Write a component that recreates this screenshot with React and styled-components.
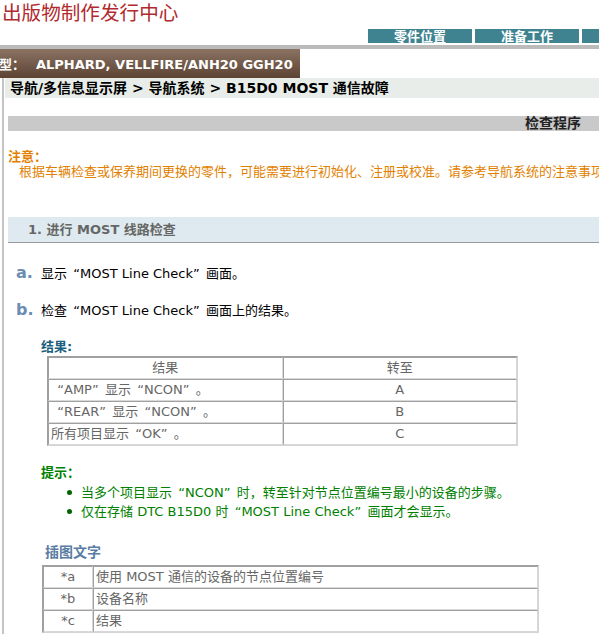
import React from "react";
import styled, { createGlobalStyle } from "styled-components";

const GlobalStyle = createGlobalStyle`
  html, body {
    margin: 0;
    padding: 0;
    background: #fff;
    overflow: hidden;
  }
  body {
    font-family: "DejaVu Sans", "Noto Sans CJK SC", sans-serif;
    font-size: 13px;
    color: #000;
  }
`;

const Page = styled.div`
  width: 599px;
  height: 634px;
  overflow: hidden;
`;

const Title = styled.div`
  height: 29px;
  line-height: 24px;
  padding-left: 2px;
  font-family: "Noto Sans CJK SC", sans-serif;
  font-size: 19.6px;
  color: #b02a2e;
  white-space: nowrap;
`;

const Tabs = styled.div`
  display: flex;
  gap: 3px;
  margin-left: 368px;
  height: 14px;
  white-space: nowrap;
`;

const Tab = styled.div`
  flex: 0 0 104px;
  height: 14px;
  line-height: 14px;
  background: #3f8391;
  color: #fff;
  font-family: "Noto Sans CJK SC", sans-serif;
  font-weight: bold;
  font-size: 13px;
  text-align: center;
`;

const Rule = styled.div`
  height: 4px;
  margin-top: 2px;
  background: #bbbbbb;
`;

const ModelBar = styled.div`
  width: 300px;
  height: 29px;
  line-height: 29px;
  background: linear-gradient(#8b7363, #5c4333);
  color: #fff;
  font-weight: bold;
  font-size: 13px;
  white-space: nowrap;
  overflow: hidden;
`;

const ModelLabel = styled.span`
  display: inline-block;
  width: 37px;
  margin-left: -1px;
  font-family: "Noto Sans CJK SC", sans-serif;
`;

const Main = styled.div`
  margin-left: 2px;
  border-left: 2px solid #c4c4c4;
  padding-bottom: 40px;
`;

const Breadcrumb = styled.div`
  height: 20px;
  line-height: 20px;
  margin-left: 1px;
  padding-left: 5px;
  background: #e9ede9;
  font-weight: bold;
  font-size: 14px;
  white-space: nowrap;
`;

const Content = styled.div`
  padding-left: 4px;
`;

const ProcedureBar = styled.div`
  margin-top: 18px;
  height: 15px;
  line-height: 15px;
  background: #c9c9c9;
  padding-right: 18px;
  text-align: right;
  font-weight: bold;
  font-size: 14px;
  color: #222;
`;

const NoteTitle = styled.div`
  margin-top: 18px;
  line-height: 15px;
  color: #e27f00;
  font-weight: bold;
`;

const NoteText = styled.div`
  line-height: 15px;
  padding-left: 11px;
  color: #e27f00;
  white-space: nowrap;
`;

const Section = styled.div`
  margin-top: 38px;
  height: 25px;
  line-height: 25px;
  padding-left: 20px;
  background: #deeaf0;
  border-bottom: 1px solid #9a9a9a;
  color: #666;
  font-weight: bold;
`;

const Step = styled.div`
  display: flex;
  align-items: baseline;
  margin-top: ${(p) => p.gap}px;
  padding-left: 8px;
  line-height: 20px;
`;

const StepMark = styled.span`
  flex: 0 0 25px;
  color: #6b8cb3;
  font-weight: bold;
  font-size: 16px;
`;

/* full-width curly quotes: the glyph sits at the inner edge of a 1em box */
const Quote = styled.span`
  display: inline-block;
  width: 1em;
  text-align: ${(p) => (p.open ? "right" : "left")};
`;

const Block = styled.div`
  padding-left: 33px;
`;

const Label = styled.div`
  margin-top: ${(p) => p.gap}px;
  line-height: ${(p) => p.lh || 18}px;
  color: ${(p) => p.color};
  font-weight: bold;
  font-size: ${(p) => p.size || 13}px;
  padding-left: ${(p) => p.indent || 0}px;
`;

const Table = styled.table`
  margin: ${(p) => p.top || 0}px 0 0 ${(p) => p.indent}px;
  width: ${(p) => p.width}px;
  border-collapse: separate;
  border-spacing: 0;
  border: 1px solid #d4d4d4;
  border-left-color: #a0a0a0;
  border-top-color: #a0a0a0;
  table-layout: fixed;
`;

const Cell = styled.td`
  height: 20px;
  padding: 0 0 0 ${(p) => (p.center ? 0 : 2)}px;
  border: 1px solid #a0a0a0;
  border-right-color: #d8d8d8;
  border-bottom-color: #d8d8d8;
  color: #666;
  text-align: ${(p) => (p.center ? "center" : "left")};
  vertical-align: middle;
  white-space: nowrap;
  line-height: 18px;
`;

const Hints = styled.ul`
  margin: 1px 0 0 0;
  padding: 0 0 0 26px;
  list-style: none;
  color: #008000;
`;

const Hint = styled.li`
  display: flex;
  align-items: center;
  gap: 9px;
  line-height: 19px;
  white-space: nowrap;

  &::before {
    content: "";
    flex: 0 0 5px;
    height: 5px;
    border-radius: 50%;
    background: #006400;
  }
`;

const Q = ({ children }) => (
  <>
    <Quote open>“</Quote>
    {children}
    <Quote>”</Quote>
  </>
);

const results = [
  { text: <><Q>AMP</Q>显示<Q>NCON</Q>。</>, go: "A" },
  { text: <><Q>REAR</Q>显示<Q>NCON</Q>。</>, go: "B" },
  { text: <>所有项目显示<Q>OK</Q>。</>, go: "C" },
];

const legend = [
  { key: "*a", text: "使用 MOST 通信的设备的节点位置编号" },
  { key: "*b", text: "设备名称" },
  { key: "*c", text: "结果" },
];

export default function App() {
  return (
    <Page>
      <GlobalStyle />
      <Title>出版物制作发行中心</Title>
      <Tabs>
        <Tab>零件位置</Tab>
        <Tab>准备工作</Tab>
        <Tab>系统图</Tab>
      </Tabs>
      <Rule />
      <ModelBar>
        <ModelLabel>型：</ModelLabel>ALPHARD, VELLFIRE/ANH20 GGH20
      </ModelBar>
      <Main>
        <Breadcrumb>导航/多信息显示屏 &gt; 导航系统 &gt; B15D0 MOST 通信故障</Breadcrumb>
        <Content>
          <ProcedureBar>检查程序</ProcedureBar>
          <NoteTitle>注意：</NoteTitle>
          <NoteText>
            根据车辆检查或保养期间更换的零件，可能需要进行初始化、注册或校准。请参考导航系统的注意事项。
          </NoteText>
          <Section>1. 进行 MOST 线路检查</Section>

          <Step gap={20}>
            <StepMark>a.</StepMark>
            <span>显示<Q>MOST Line Check</Q>画面。</span>
          </Step>
          <Step gap={16}>
            <StepMark>b.</StepMark>
            <span>检查<Q>MOST Line Check</Q>画面上的结果。</span>
          </Step>

          <Block>
            <Label gap={17} color="#1b5f7e">结果:</Label>
            <Table indent={6} width={471}>
              <tbody>
                <tr>
                  <Cell center>结果</Cell>
                  <Cell center>转至</Cell>
                </tr>
                {results.map((r) => (
                  <tr key={r.go}>
                    <Cell>{r.text}</Cell>
                    <Cell center>{r.go}</Cell>
                  </tr>
                ))}
              </tbody>
            </Table>

            <Label gap={18} color="#008000">提示：</Label>
            <Hints>
              <Hint>
                <span>当多个项目显示<Q>NCON</Q>时，转至针对节点位置编号最小的设备的步骤。</span>
              </Hint>
              <Hint>
                <span>仅在存储 DTC B15D0 时<Q>MOST Line Check</Q>画面才会显示。</span>
              </Hint>
            </Hints>

            <Label gap={21} lh={20} color="#5a7da3" size={14} indent={4}>插图文字</Label>
            <Table top={3} indent={1} width={497}>
              <colgroup>
                <col style={{ width: 50 }} />
                <col />
              </colgroup>
              <tbody>
                {legend.map((l) => (
                  <tr key={l.key}>
                    <Cell center>{l.key}</Cell>
                    <Cell>{l.text}</Cell>
                  </tr>
                ))}
              </tbody>
            </Table>
          </Block>
        </Content>
      </Main>
    </Page>
  );
}
